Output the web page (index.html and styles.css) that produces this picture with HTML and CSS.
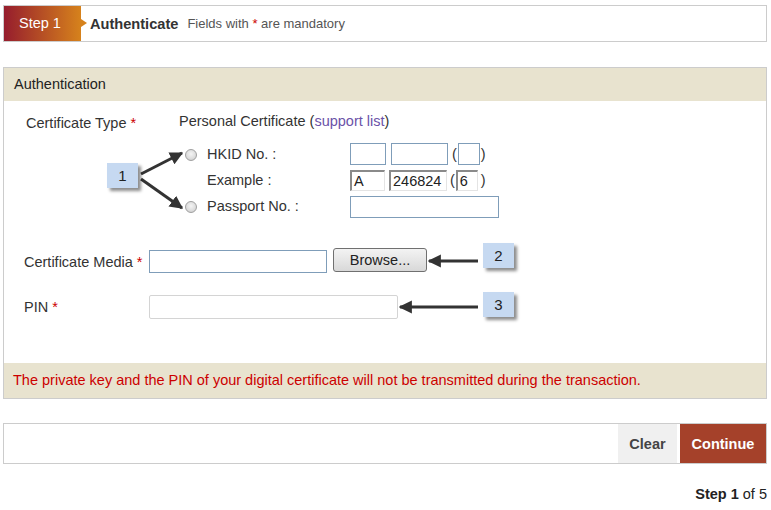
FILE: index.html
```html
<!DOCTYPE html>
<html lang="en">
<head>
    <meta charset="UTF-8">
    <meta name="viewport" content="width=device-width, initial-scale=1.0">
    <title>Step 1 - Authenticate</title>
    <link rel="stylesheet" href="styles.css">
</head>
<body>

    <div class="page">
        <div class="topbar">
            <div class="step-badge">Step 1</div>
            <span class="topbar-title">Authenticate</span>
            <span class="topbar-note">Fields with <span class="req">*</span> are mandatory</span>
        </div>

        <div class="panel">
            <div class="panel-head">Authentication</div>
            <div class="panel-body">
                <div class="type-row">
                    <div class="type-label">Certificate Type <span class="req">*</span></div>
                    <div class="type-value">Personal Certificate (<a href="#">support list</a>)</div>
                </div>

                <div class="id-grid">
                    <span class="radio"></span>
                    <span class="id-label">HKID No. :</span>
                    <span class="id-inputs">
                        <input type="text" class="box box-a">
                        <input type="text" class="box box-b">
                        <span class="paren">(</span><input type="text" class="box box-c"><span class="paren">)</span>
                    </span>

                    <span></span>
                    <span class="id-label">Example :</span>
                    <span class="id-inputs example">
                        <span class="ex ex-a">A</span>
                        <span class="ex ex-b">246824</span>
                        <span class="paren">(</span><span class="ex ex-c">6</span><span class="paren">)</span>
                    </span>

                    <span class="radio"></span>
                    <span class="id-label">Passport No. :</span>
                    <span class="id-inputs">
                        <input type="text" class="box box-pass">
                    </span>
                </div>

                <div class="field-row media-row">
                    <label class="field-label">Certificate Media <span class="req">*</span></label>
                    <input type="text" class="box media-input">
                    <button type="button" class="browse">Browse...</button>
                </div>

                <div class="field-row pin-row">
                    <label class="field-label">PIN <span class="req">*</span></label>
                    <input type="password" class="pin-input">
                </div>
            </div>
            <div class="panel-note">The private key and the PIN of your digital certificate will not be transmitted during the transaction.</div>
        </div>

        <div class="actions">
            <button type="button" class="btn-clear">Clear</button>
            <button type="button" class="btn-continue">Continue</button>
        </div>

        <div class="step-count"><b>Step 1</b> of 5</div>
    </div>

    <!-- help callouts drawn over the form -->
    <svg class="annot" width="771" height="510" viewBox="0 0 771 510">
        <defs>
            <marker id="head" viewBox="0 0 4 4" markerWidth="4.4" markerHeight="4.4" refX="3.6" refY="2" orient="auto">
                <path d="M0,0 L4,2 L0,4 z" fill="#333"/>
            </marker>
        </defs>
        <line x1="141" y1="174" x2="182" y2="153" stroke="#333" stroke-width="3" marker-end="url(#head)"/>
        <line x1="141" y1="179" x2="182" y2="208" stroke="#333" stroke-width="3" marker-end="url(#head)"/>
        <line x1="478" y1="261" x2="429" y2="261" stroke="#333" stroke-width="3" marker-end="url(#head)"/>
        <line x1="478" y1="307" x2="400" y2="307" stroke="#333" stroke-width="3" marker-end="url(#head)"/>
    </svg>
    <div class="callout callout-1">1</div>
    <div class="callout callout-2">2</div>
    <div class="callout callout-3">3</div>

</body>
</html>
```

FILE: styles.css
```css
body {
    margin: 0;
    font-family: "Liberation Sans", Arial, sans-serif;
    font-size: 14.5px;
    color: #333;
    background: #fff;
}
.page {
    width: 764px;
    margin-left: 3px;
}
.req {
    color: #cc0000;
}

/* top step bar */
.topbar {
    margin-top: 5px;
    height: 37px;
    box-sizing: border-box;
    border: 1px solid #ccc;
    display: flex;
    align-items: center;
}
.step-badge {
    position: relative;
    width: 77px;
    height: 35px;
    box-sizing: border-box;
    padding-left: 15px;
    line-height: 35px;
    color: #fff;
    font-size: 14.5px;
    background: linear-gradient(to right, #961d2d, #d6821c);
}
.step-badge::after {
    content: "";
    position: absolute;
    right: -6px;
    top: 13px;
    border-left: 6px solid #d6821c;
    border-top: 4px solid transparent;
    border-bottom: 4px solid transparent;
}
.topbar-title {
    margin-left: 9px;
    font-weight: bold;
    font-size: 14.6px;
    color: #333;
}
.topbar-note {
    margin-left: 9px;
    font-size: 13px;
    color: #555;
}

/* authentication panel */
.panel {
    margin-top: 25px;
    border: 1px solid #ccc;
}
.panel-head {
    height: 33px;
    line-height: 33px;
    padding-left: 10px;
    background: #e8e3cf;
    color: #222;
}
.panel-body {
    height: 262px;
    padding-top: 1px;
    box-sizing: border-box;
}
.panel-note {
    height: 35px;
    line-height: 35px;
    padding-left: 9px;
    background: #e8e3cf;
    color: #cc0000;
}

.type-row {
    display: flex;
    margin-top: 10px;
    padding-left: 22px;
    line-height: 18px;
}
.type-label {
    width: 153px;
    padding-top: 2px;
}
.type-value a {
    color: #6b52a8;
    text-decoration: none;
}

.id-grid {
    display: grid;
    grid-template-columns: 22px 143px auto;
    grid-template-rows: 22px 22px 22px;
    row-gap: 4px;
    margin-top: 11px;
    margin-left: 181px;
    align-items: center;
}
.radio {
    width: 12px;
    height: 12px;
    box-sizing: border-box;
    border: 1px solid #a0a0a0;
    border-radius: 50%;
    background: radial-gradient(circle at 50% 40%, #f4f4f4 0, #dcdcdc 60%, #c4c4c4 100%);
    margin-top: 2px;
}
.id-inputs {
    display: flex;
    align-items: center;
    height: 22px;
}
.box {
    box-sizing: border-box;
    height: 22px;
    border: 1px solid #7f9db9;
    padding: 0 2px;
    font: 14.5px "Liberation Sans", Arial, sans-serif;
    background: #fff;
}
.box-a {
    width: 36px;
}
.box-b {
    width: 57px;
    margin-left: 5px;
}
.box-c {
    width: 22px;
}
.box-pass {
    width: 149px;
    margin-top: 1px;
}
.paren {
    padding: 0 1px 0 4px;
}
.box-c + .paren, .ex-c + .paren {
    padding: 0 0 0 1px;
}
.ex {
    box-sizing: border-box;
    height: 21px;
    line-height: 19px;
    padding-left: 2px;
    border-top: 2px solid #8a8a8a;
    border-left: 2px solid #8a8a8a;
    border-right: 1px solid #e4e4e4;
    border-bottom: 1px solid #e4e4e4;
    color: #222;
}
.ex-a {
    width: 35px;
}
.ex-b {
    width: 58px;
    margin-left: 4px;
}
.ex-c {
    width: 22px;
}
.example .paren {
    padding-left: 3px;
}

.field-row {
    display: flex;
    align-items: center;
    padding-left: 20px;
}
.field-label {
    width: 125px;
}
.media-row {
    margin-top: 33px;
}
.media-input {
    width: 178px;
    height: 23px;
}
.browse {
    margin-left: 6px;
    margin-top: -3px;
    width: 94px;
    height: 24px;
    border: 1px solid #707070;
    border-radius: 3px;
    background: linear-gradient(#f3f3f3, #e6e6e6 50%, #d8d8d8);
    font: 14.5px "Liberation Sans", Arial, sans-serif;
    color: #222;
    padding: 0;
}
.pin-row {
    margin-top: 22px;
}
.pin-input {
    box-sizing: border-box;
    width: 249px;
    height: 24px;
    border: 1px solid #d4d4d4;
    border-radius: 2px;
}

/* bottom actions */
.actions {
    margin-top: 24px;
    height: 41px;
    box-sizing: border-box;
    border: 1px solid #ccc;
    display: flex;
    justify-content: flex-end;
}
.actions button {
    border: none;
    font: bold 14.5px "Liberation Sans", Arial, sans-serif;
    cursor: pointer;
}
.btn-clear {
    width: 59px;
    background: #f0f0f0;
    color: #444;
}
.btn-continue {
    width: 86px;
    margin-left: 3px;
    background: #a5412a;
    color: #fff;
}
.step-count {
    margin-top: 21px;
    text-align: right;
    line-height: 18px;
    color: #222;
}

/* help callouts */
.annot {
    position: absolute;
    left: 0;
    top: 0;
    pointer-events: none;
}
.callout {
    position: absolute;
    width: 31px;
    height: 25px;
    line-height: 25px;
    text-align: center;
    font-size: 15px;
    color: #222;
    background: #c6d9f1;
    box-shadow: 3px 3px 3px rgba(0, 0, 0, 0.45);
}
.callout-1 {
    left: 107px;
    top: 163px;
}
.callout-2 {
    left: 483px;
    top: 243px;
}
.callout-3 {
    left: 483px;
    top: 292px;
}
```
